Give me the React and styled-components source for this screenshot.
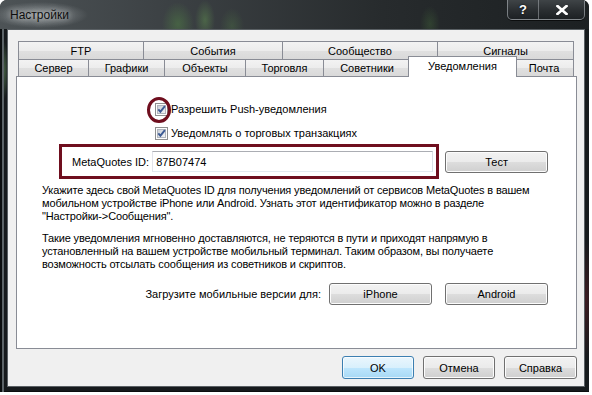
import React from 'react';
import styled, { createGlobalStyle } from 'styled-components';

const Global = createGlobalStyle`
  html, body { margin: 0; padding: 0; background: #ffffff; }
  body { font-family: "Liberation Sans", Arial, sans-serif; }
  * { box-sizing: border-box; }
`;

const Window = styled.div`
  width: 589px;
  height: 392px;
  display: flex;
  flex-direction: column;
  border-radius: 7px 7px 0 0;
  overflow: hidden;
  background:
    radial-gradient(ellipse 6px 30px at 3px 70px, rgba(120,170,110,0.55), transparent),
    radial-gradient(ellipse 8px 60px at 586px 300px, rgba(110,30,40,0.45), transparent),
    #161a1c;
  box-shadow: inset 2px 0 0 #0b0e0f, inset 4px 0 0 #5c6468, inset 0 -1px 0 #0b0e0f;
`;

const TitleBar = styled.div`
  height: 29px;
  flex: 0 0 29px;
  display: flex;
  align-items: flex-start;
  justify-content: space-between;
  padding: 0 4px 0 10px;
  background:
    radial-gradient(ellipse 48px 13px at 40px 15px, rgba(205,210,212,0.55), transparent 100%),
    radial-gradient(ellipse 16px 22px at 178px 24px, rgba(80,125,70,0.55), transparent),
    radial-gradient(ellipse 10px 20px at 205px 20px, rgba(95,140,80,0.5), transparent),
    radial-gradient(ellipse 12px 18px at 232px 26px, rgba(80,120,70,0.35), transparent),
    radial-gradient(ellipse 10px 18px at 430px 24px, rgba(70,110,60,0.35), transparent),
    linear-gradient(90deg, #4d5356 0%, #3b4043 30%, #272b2d 65%, #1c2022 100%);
`;

const Title = styled.div`
  font-family: "Liberation Sans", Arial, sans-serif;
  font-size: 12px;
  line-height: 14px;
  margin-top: 8px;
  color: #0e0e0e;
  text-shadow: 0 0 6px rgba(255,255,255,0.55), 0 0 10px rgba(255,255,255,0.35);
`;

const CaptionButtons = styled.div`
  display: flex;
  height: 20px;
  border: 1px solid rgba(190,196,200,0.55);
  border-top: none;
  border-radius: 0 0 5px 5px;
  overflow: hidden;
  background: linear-gradient(#3f4447, #2a2e31 55%, #1d2124);
  box-shadow: 0 1px 0 rgba(0,0,0,0.6);
`;

const CaptionButton = styled.div`
  width: ${p => p.$w}px;
  display: flex;
  align-items: center;
  justify-content: center;
  color: #ffffff;
  font-family: "Liberation Sans", Arial, sans-serif;
  font-weight: bold;
  font-size: 13px;
  text-shadow: 0 0 2px #000;
  border-left: ${p => (p.$divider ? '1px solid rgba(190,196,200,0.45)' : 'none')};
`;

const Client = styled.div`
  flex: 1;
  margin: 0 4px 5px 7px;
  border: 1px solid #5a6064;
  background: #f0f0f0;
  display: flex;
  flex-direction: column;
  padding: 11px 7px 0 8px;
`;

const TabRow = styled.div`
  display: flex;
  align-items: flex-start;
  height: ${p => p.$h}px;
  margin: 0 4px 0 2px;
`;

const Tab = styled.div`
  flex: 0 0 ${p => p.$w}px;
  height: ${p => p.$h}px;
  margin-left: -1px;
  &:first-child { margin-left: 0; }
  border: 1px solid #898c95;
  border-bottom: none;
  display: flex;
  align-items: center;
  justify-content: center;
  font-size: 11px;
  color: #000;
  white-space: nowrap;
  background: linear-gradient(#f3f3f3 0%, #ececec 50%, #e0e0e0 51%, #d9d9d9 100%);
`;

const ActiveTab = styled(Tab)`
  position: relative;
  z-index: 2;
  margin-left: -3px;
  margin-right: -2px;
  margin-top: -3px;
  height: 21px;
  padding-bottom: 3px;
  background: #ffffff;
`;

const Panel = styled.div`
  height: 273px;
  border: 1px solid #898c95;
  background: #ffffff;
  display: flex;
  flex-direction: column;
  padding: 0 28px 0 25px;
  font-size: 11px;
  color: #000;
`;

const CheckRow = styled.label`
  display: flex;
  align-items: center;
  gap: 3px;
  height: 13px;
  margin-top: ${p => p.$mt}px;
  padding-left: 113px;
  line-height: 13px;
  white-space: nowrap;
`;

const CheckWrap = styled.span`
  position: relative;
  width: 13px;
  height: 13px;
  display: inline-flex;
`;

const Highlight = styled.svg`
  position: absolute;
  left: -11px;
  top: -8px;
  pointer-events: none;
`;

const IdRow = styled.div`
  display: flex;
  align-items: center;
  margin-top: 4px;
  padding-left: 17px;
`;

const IdFrame = styled.div`
  width: 381px;
  height: 35px;
  border: 3px solid #6f0e1e;
  display: flex;
  align-items: center;
  padding: 0 3px 0 10px;
`;

const FieldLabel = styled.span`
  white-space: nowrap;
`;

const TextField = styled.div`
  margin-left: auto;
  width: 281px;
  height: 21px;
  border: 1px solid;
  border-color: #abadb3 #dbdfe6 #e3e9ef #e2e3ea;
  background: #fff;
  display: flex;
  align-items: center;
  padding-left: 3px;
  font-size: 11px;
`;

const Button = styled.div`
  width: ${p => p.$w}px;
  height: ${p => p.$h || 22}px;
  margin-left: ${p => p.$ml || 0}px;
  border: 1px solid ${p => (p.$default ? '#3c7fb1' : '#707070')};
  border-radius: 3px;
  display: flex;
  align-items: center;
  justify-content: center;
  font-size: 11px;
  color: #000;
  white-space: nowrap;
  background: ${p =>
    p.$default
      ? 'linear-gradient(#eaf6fd 0%, #d9f0fc 50%, #bee6fd 51%, #a7d9f5 100%)'
      : 'linear-gradient(#f2f2f2 0%, #ebebeb 50%, #dddddd 51%, #cfcfcf 100%)'};
  box-shadow: inset 0 0 0 1px ${p => (p.$default ? 'rgba(255,255,255,0.7)' : '#fcfcfc')};
`;

const Para = styled.p`
  margin: ${p => p.$mt}px 0 0 0;
  line-height: 13px;
  letter-spacing: -0.15px;
  white-space: nowrap;
`;

const DownloadRow = styled.div`
  display: flex;
  align-items: center;
  justify-content: flex-end;
  margin-top: 12px;
`;

const ButtonBar = styled.div`
  display: flex;
  justify-content: flex-end;
  gap: 9px;
  margin-top: 7px;
`;

const CheckIcon = () => (
  <svg width="13" height="13" viewBox="0 0 13 13">
    <defs>
      <linearGradient id="cbfill" x1="0" y1="0" x2="1" y2="1">
        <stop offset="0" stopColor="#c9ced6" />
        <stop offset="1" stopColor="#f4f5f7" />
      </linearGradient>
    </defs>
    <rect x="0.5" y="0.5" width="12" height="12" fill="#fdfdfd" stroke="#8e8f8f" />
    <rect x="2.5" y="2.5" width="8" height="8" fill="url(#cbfill)" stroke="#b0b5bd" />
    <path d="M3.3 6.4 L5.4 8.7 L9.9 3.2" fill="none" stroke="#3d5b94" strokeWidth="1.9" />
  </svg>
);

const Checkbox = ({ circled }) => (
  <CheckWrap>
    <CheckIcon />
    {circled && (
      <Highlight width="30" height="30" viewBox="0 0 30 30">
        <ellipse cx="15" cy="15" rx="10.5" ry="11.5" fill="none" stroke="#6f0e1e" strokeWidth="3" />
      </Highlight>
    )}
  </CheckWrap>
);

const topTabs = [
  ['FTP', 126],
  ['События', 140],
  ['Сообщество', 156],
  ['Сигналы', 137],
];

const bottomTabs = [
  ['Сервер', 71],
  ['Графики', 77],
  ['Объекты', 82],
  ['Торговля', 79],
  ['Советники', 88],
  ['Уведомления', 109, true],
  ['Почта', 60],
];

export default function App() {
  return (
    <>
      <Global />
      <Window>
        <TitleBar>
          <Title>Настройки</Title>
          <CaptionButtons>
            <CaptionButton $w={30}>?</CaptionButton>
            <CaptionButton $w={46} $divider>
              <svg width="12" height="10" viewBox="0 0 12 10">
                <path d="M1.5 1 L10.5 9 M10.5 1 L1.5 9" stroke="#fff" strokeWidth="2.6" strokeLinecap="square" />
              </svg>
            </CaptionButton>
          </CaptionButtons>
        </TitleBar>
        <Client>
          <TabRow $h={18}>
            {topTabs.map(([t, w]) => (
              <Tab key={t} $w={w} $h={18}>{t}</Tab>
            ))}
          </TabRow>
          <TabRow $h={17}>
            {bottomTabs.map(([t, w, active]) =>
              active ? (
                <ActiveTab key={t} $w={w} $h={21}>{t}</ActiveTab>
              ) : (
                <Tab key={t} $w={w} $h={17}>{t}</Tab>
              )
            )}
          </TabRow>
          <Panel>
            <CheckRow $mt={26}>
              <Checkbox circled />
              <span>Разрешить Push-уведомления</span>
            </CheckRow>
            <CheckRow $mt={11}>
              <Checkbox />
              <span>Уведомлять о торговых транзакциях</span>
            </CheckRow>
            <IdRow>
              <IdFrame>
                <FieldLabel>MetaQuotes ID:</FieldLabel>
                <TextField>87B07474</TextField>
              </IdFrame>
              <Button $w={103} $ml={6}>Тест</Button>
            </IdRow>
            <Para $mt={5}>
              Укажите здесь свой MetaQuotes ID для получения уведомлений от сервисов MetaQuotes в вашем
              <br />
              мобильном устройстве iPhone или Android. Узнать этот идентификатор можно в разделе
              <br />
              "Настройки-&gt;Сообщения".
            </Para>
            <Para $mt={9}>
              Такие уведомления мгновенно доставляются, не теряются в пути и приходят напрямую в
              <br />
              установленный на вашем устройстве мобильный терминал. Таким образом, вы получаете
              <br />
              возможность отсылать сообщения из советников и скриптов.
            </Para>
            <DownloadRow>
              <span>Загрузите мобильные версии для:</span>
              <Button $w={103} $ml={8}>iPhone</Button>
              <Button $w={103} $ml={13}>Android</Button>
            </DownloadRow>
          </Panel>
          <ButtonBar>
            <Button $w={72} $h={23} $default>OK</Button>
            <Button $w={72} $h={23}>Отмена</Button>
            <Button $w={73} $h={23}>Справка</Button>
          </ButtonBar>
        </Client>
      </Window>
    </>
  );
}
